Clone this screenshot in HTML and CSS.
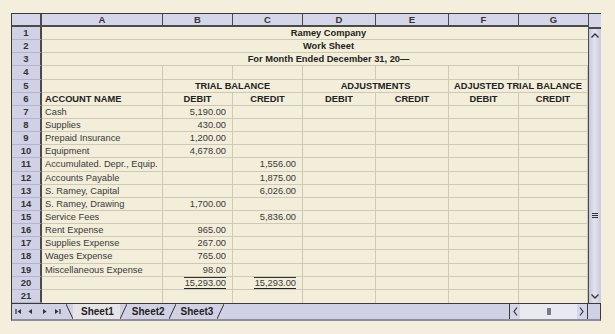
FILE: index.html
```html
<!DOCTYPE html>
<html lang="en">
<head>
    <meta charset="UTF-8">
    <title>Work Sheet</title>
    <link rel="stylesheet" href="styles.css">
</head>
<body>
    <div class="sheet">
        <div class="body">
            <div class="grid">
                <div class="hd corner"></div>
                <div class="hd">A</div><div class="hd">B</div><div class="hd">C</div><div class="hd">D</div>
                <div class="hd">E</div><div class="hd">F</div><div class="hd">G</div>

                <div class="rn">1</div><div class="c title">Ramey Company</div>
                <div class="rn">2</div><div class="c title">Work Sheet</div>
                <div class="rn">3</div><div class="c title">For Month Ended December 31, 20—</div>

                <div class="rn">4</div><div class="c"></div><div class="c"></div><div class="c"></div><div class="c"></div><div class="c"></div><div class="c"></div><div class="c"></div>

                <div class="rn">5</div><div class="c"></div>
                <div class="c grp">TRIAL BALANCE</div>
                <div class="c grp">ADJUSTMENTS</div>
                <div class="c grp">ADJUSTED TRIAL BALANCE</div>

                <div class="rn">6</div><div class="c bold">ACCOUNT NAME</div>
                <div class="c bold mid">DEBIT</div><div class="c bold mid">CREDIT</div>
                <div class="c bold mid">DEBIT</div><div class="c bold mid">CREDIT</div>
                <div class="c bold mid">DEBIT</div><div class="c bold mid">CREDIT</div>

                <div class="rn">7</div><div class="c">Cash</div><div class="c num">5,190.00</div><div class="c"></div><div class="c"></div><div class="c"></div><div class="c"></div><div class="c"></div>
                <div class="rn">8</div><div class="c">Supplies</div><div class="c num">430.00</div><div class="c"></div><div class="c"></div><div class="c"></div><div class="c"></div><div class="c"></div>
                <div class="rn">9</div><div class="c">Prepaid Insurance</div><div class="c num">1,200.00</div><div class="c"></div><div class="c"></div><div class="c"></div><div class="c"></div><div class="c"></div>
                <div class="rn">10</div><div class="c">Equipment</div><div class="c num">4,678.00</div><div class="c"></div><div class="c"></div><div class="c"></div><div class="c"></div><div class="c"></div>
                <div class="rn">11</div><div class="c">Accumulated. Depr., Equip.</div><div class="c"></div><div class="c num">1,556.00</div><div class="c"></div><div class="c"></div><div class="c"></div><div class="c"></div>
                <div class="rn">12</div><div class="c">Accounts Payable</div><div class="c"></div><div class="c num">1,875.00</div><div class="c"></div><div class="c"></div><div class="c"></div><div class="c"></div>
                <div class="rn">13</div><div class="c">S. Ramey, Capital</div><div class="c"></div><div class="c num">6,026.00</div><div class="c"></div><div class="c"></div><div class="c"></div><div class="c"></div>
                <div class="rn">14</div><div class="c">S. Ramey, Drawing</div><div class="c num">1,700.00</div><div class="c"></div><div class="c"></div><div class="c"></div><div class="c"></div><div class="c"></div>
                <div class="rn">15</div><div class="c">Service Fees</div><div class="c"></div><div class="c num">5,836.00</div><div class="c"></div><div class="c"></div><div class="c"></div><div class="c"></div>
                <div class="rn">16</div><div class="c">Rent Expense</div><div class="c num">965.00</div><div class="c"></div><div class="c"></div><div class="c"></div><div class="c"></div><div class="c"></div>
                <div class="rn">17</div><div class="c">Supplies Expense</div><div class="c num">267.00</div><div class="c"></div><div class="c"></div><div class="c"></div><div class="c"></div><div class="c"></div>
                <div class="rn">18</div><div class="c">Wages Expense</div><div class="c num">765.00</div><div class="c"></div><div class="c"></div><div class="c"></div><div class="c"></div><div class="c"></div>
                <div class="rn">19</div><div class="c">Miscellaneous Expense</div><div class="c num">98.00</div><div class="c"></div><div class="c"></div><div class="c"></div><div class="c"></div><div class="c"></div>
                <div class="rn">20</div><div class="c"></div><div class="c num"><span class="total">15,293.00</span></div><div class="c num"><span class="total">15,293.00</span></div><div class="c"></div><div class="c"></div><div class="c"></div><div class="c"></div>
                <div class="rn">21</div><div class="c"></div><div class="c"></div><div class="c"></div><div class="c"></div><div class="c"></div><div class="c"></div><div class="c"></div>
            </div>
            <div class="vscroll">
                <div class="cap"></div>
                <div class="btn"><svg width="12" height="12" viewBox="0 0 12 12"><polyline points="2.5,7.5 6,4 9.5,7.5" fill="none" stroke="#333" stroke-width="1.3"/></svg></div>
                <div class="track"></div>
                <div class="btn"><svg width="12" height="10" viewBox="0 0 12 10"><path d="M3 3.5h6M3 5.5h6M3 7.5h6" stroke="#333" stroke-width="1"/></svg></div>
                <div class="gap"></div>
                <div class="btn"><svg width="12" height="12" viewBox="0 0 12 12"><polyline points="2.5,4.5 6,8 9.5,4.5" fill="none" stroke="#333" stroke-width="1.3"/></svg></div>
            </div>
        </div>
        <div class="tabbar">
            <div class="nav">
                <svg width="54" height="15" viewBox="0 0 54 15">
                    <path d="M4 5v5" stroke="#333" stroke-width="1.2"/>
                    <polygon points="9,5 9,10 5.5,7.5" fill="#333"/>
                    <polygon points="20,5 20,10 16.5,7.5" fill="#333"/>
                    <polygon points="31,5 31,10 34.5,7.5" fill="#333"/>
                    <polygon points="43,5 43,10 46.5,7.5" fill="#333"/>
                    <path d="M48 5v5" stroke="#333" stroke-width="1.2"/>
                </svg>
            </div>
            <svg class="slash" width="7" height="15" viewBox="0 0 7 15"><line x1="0" y1="0" x2="7" y2="15" stroke="#333" stroke-width="1"/></svg>
            <span class="tab active">Sheet1</span>
            <svg class="slash" width="7" height="15" viewBox="0 0 7 15"><line x1="7" y1="0" x2="0" y2="15" stroke="#333" stroke-width="1"/></svg>
            <span class="tab">Sheet2</span>
            <svg class="slash" width="7" height="15" viewBox="0 0 7 15"><line x1="7" y1="0" x2="0" y2="15" stroke="#333" stroke-width="1"/></svg>
            <span class="tab">Sheet3</span>
            <svg class="slash" width="7" height="15" viewBox="0 0 7 15"><line x1="7" y1="0" x2="0" y2="15" stroke="#333" stroke-width="1"/></svg>
            <div class="fill"></div>
            <div class="hscroll">
                <svg width="12" height="15" viewBox="0 0 12 15"><polyline points="7,3.5 4,7.5 7,11.5" fill="none" stroke="#333" stroke-width="1.2"/></svg>
                <svg width="10" height="15" viewBox="0 0 10 15"><path d="M4 4v7M6 4v7" stroke="#333" stroke-width="1.2"/></svg>
                <svg width="12" height="15" viewBox="0 0 12 15"><polyline points="5,3.5 8,7.5 5,11.5" fill="none" stroke="#333" stroke-width="1.2"/></svg>
            </div>
            <div class="corner2"></div>
        </div>
    </div>
</body>
</html>
```

FILE: styles.css
```css
body {
    margin: 0;
    padding: 13px 0 0 11px;
    background: #f4efdc;
    font-family: "Liberation Sans", Arial, sans-serif;
    color: #2b2b2b;
}

.sheet {
    width: 590px;
    box-sizing: border-box;
    border: 1px solid #3a3a3a;
    border-bottom: 2px solid #8d8d9c;
    background: #f3eed9;
}

.body {
    display: flex;
}

.grid {
    display: grid;
    grid-template-columns: 30px 121px 70px 70px 73px 73px 70px 69px;
    grid-template-rows: 13px repeat(21, 13.15px);
}

.hd {
    background: #d6d6ea;
    border-right: 1px solid #4a4a4a;
    border-bottom: 2px solid #4a4a4a;
    font-size: 9.5px;
    font-weight: bold;
    text-align: center;
    line-height: 12px;
    color: #333;
}

.hd:nth-child(8) {
    border-right: none;
}

.hd.corner {
    border-right: 2px solid #4a4a4a;
}

.rn {
    background: #d1d1e6;
    border-right: 2px solid #4a4a4a;
    border-bottom: 1px solid #b4b4cc;
    font-size: 9.5px;
    font-weight: bold;
    text-align: center;
    line-height: 12px;
    color: #333;
}

.c {
    border-right: 1px solid #cdc8b7;
    border-bottom: 1px solid #cdc8b7;
    font-size: 9.3px;
    line-height: 12px;
    padding: 0 3px;
    white-space: nowrap;
    overflow: hidden;
    color: #383838;
}

.title {
    grid-column: span 7;
    border-right: none;
    text-align: center;
    font-weight: bold;
    padding-left: 30px;
    color: #222;
}

.grp {
    grid-column: span 2;
    text-align: center;
    font-weight: bold;
    color: #222;
}

.bold {
    font-weight: bold;
    color: #222;
}

.mid {
    text-align: center;
}

.num {
    text-align: right;
    padding-right: 6px;
}

.total {
    display: inline-block;
    border-top: 1px solid #333;
    border-bottom: 2px solid #222;
    line-height: 10px;
    padding-left: 1px;
}

.grid > .c:nth-last-child(-n+8) {
    border-bottom: none;
}

.vscroll {
    width: 12px;
    border-left: 1px solid #4a4a4a;
    display: flex;
    flex-direction: column;
    background: linear-gradient(90deg, #c6c6dc, #e3e3ef 45%, #c9c9de);
}

.vscroll .cap {
    height: 13px;
    background: #d6d6ea;
    border-bottom: 2px solid #4a4a4a;
}

.vscroll .btn {
    height: 13px;
    display: flex;
    justify-content: center;
    align-items: center;
}

.vscroll .track {
    flex: 1;
}

.vscroll .gap {
    height: 68px;
}

.tabbar {
    display: flex;
    align-items: stretch;
    height: 15px;
    border-top: 1px solid #3a3a3a;
    background: #d1d1e5;
}

.nav {
    width: 54px;
    display: flex;
}

.slash {
    display: block;
}

.tab {
    font-size: 10px;
    font-weight: bold;
    line-height: 15px;
    padding: 0 4px 0 5px;
    color: #222;
}

.tab.active {
    background: #e6e4e6;
    padding: 0 6px 0 8px;
}

.fill {
    flex: 1;
}

.hscroll {
    width: 77px;
    border-left: 1px solid #3a3a3a;
    display: flex;
    justify-content: space-between;
    background: linear-gradient(90deg, #d6d6ea 0 10px, #e9e9f2 10px 67px, #d6d6ea 67px);
}

.corner2 {
    width: 12px;
    border-left: 1px solid #3a3a3a;
    background: #d1d1e5;
}
```
